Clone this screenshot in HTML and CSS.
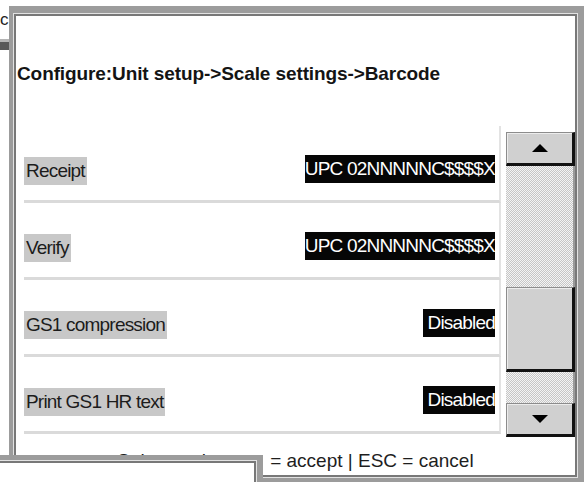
FILE: index.html
```html
<!DOCTYPE html>
<html lang="en">
<head>
    <meta charset="UTF-8">
    <title>Barcode settings</title>
    <link rel="stylesheet" href="styles.css">
</head>
<body>
    <div class="desk">
        <!-- window lying behind -->
        <div class="back-win">
            <div class="back-text">c</div>
            <div class="back-bar"></div>
        </div>

        <div class="win main-win">
            <div class="win-inner">
                <h1 class="title">Configure:Unit setup-&gt;Scale settings-&gt;Barcode</h1>

                <div class="list-area">
                    <div class="rows">
                        <div class="row">
                            <span class="label">Receipt</span>
                            <span class="value code"><span>UPC 02NNNNNC$$$$X</span></span>
                        </div>
                        <div class="row">
                            <span class="label">Verify</span>
                            <span class="value code"><span>UPC 02NNNNNC$$$$X</span></span>
                        </div>
                        <div class="row">
                            <span class="label">GS1 compression</span>
                            <span class="value state"><span>Disabled</span></span>
                        </div>
                        <div class="row">
                            <span class="label">Print GS1 HR text</span>
                            <span class="value state"><span>Disabled</span></span>
                        </div>
                    </div>

                    <div class="scrollbar">
                        <div class="sb-btn">
                            <svg width="16" height="8" viewBox="0 0 16 8"><polygon points="0,8 8,0 16,8" fill="#000"/></svg>
                        </div>
                        <div class="sb-track top-track"></div>
                        <div class="sb-thumb"></div>
                        <div class="sb-track low-track"></div>
                        <div class="sb-btn">
                            <svg width="16" height="8" viewBox="0 0 16 8"><polygon points="0,0 16,0 8,8" fill="#000"/></svg>
                        </div>
                    </div>
                </div>

                <div class="status">Select option + &#8629; = accept | ESC = cancel</div>
            </div>
        </div>

        <!-- window lying in front, bottom left -->
        <div class="win front-win">
            <div class="win-inner"></div>
        </div>
    </div>
</body>
</html>
```

FILE: styles.css
```css
/* Page */
body {
    margin: 0;
    background: #fff;
    font-family: "Liberation Sans", Arial, sans-serif;
}

.desk {
    position: relative;
    width: 584px;
    height: 482px;
    overflow: hidden;
    background: #fff;
}

/* Window behind */
.back-win {
    position: absolute;
    left: 0;
    top: 0;
    width: 20px;
    height: 60px;
}

.back-text {
    padding-top: 10px;
    font-size: 17px;
    line-height: 20px;
    color: #222;
}

.back-bar {
    margin-top: 9px;
    height: 8px;
    background: #585858;
    border-top: 3px solid #b4b4b4;
}

/* Window frames */
.win {
    position: absolute;
    box-sizing: border-box;
    border-style: solid;
    border-color: #9c9c9c;
}

.win-inner {
    box-sizing: border-box;
    height: 100%;
    padding: 2px;
    border: 1px solid #e2e2e2;
    box-shadow: inset 0 0 0 2px #787878;
    background: #fff;
}

.main-win {
    left: 9px;
    top: 6px;
    width: 575px;
    height: 476px;
    border-width: 7px 6px 4px 4px;
}

.front-win {
    left: -12px;
    top: 455px;
    width: 275px;
    height: 40px;
    border-width: 5px 6px 0 4px;
}

/* Heading */
.title {
    margin: 47px 0 0 1px;
    font-size: 19px;
    line-height: 22px;
    font-weight: bold;
    letter-spacing: -0.1px;
    color: #141414;
}

/* Option list */
.list-area {
    display: flex;
    align-items: flex-start;
    margin-top: 41px;
}

.rows {
    margin-left: 8px;
    width: 477px;
}

.row {
    display: flex;
    align-items: center;
    justify-content: space-between;
    box-sizing: border-box;
    height: 77px;
    padding: 16px 4px 0 0;
    border-right: 2px solid #e3e3e3;
    border-bottom: 3px solid #dadada;
}

.label {
    height: 28px;
    line-height: 28px;
    padding: 0 2px;
    background: #c8c8c8;
    font-size: 19px;
    letter-spacing: -0.8px;
    color: #1c1c1c;
}

.value {
    display: flex;
    justify-content: flex-end;
    overflow: hidden;
    height: 28px;
    line-height: 28px;
    margin-bottom: 4px;
    background: #060606;
    color: #fff;
    font-size: 19px;
    letter-spacing: -0.8px;
}

.value span {
    flex-shrink: 0;
    white-space: nowrap;
}

.value.code {
    width: 190px;
}

.value.state {
    width: 72px;
}

/* Scrollbar */
.scrollbar {
    display: flex;
    flex-direction: column;
    width: 69px;
    margin: 6px 0 0 5px;
}

.sb-btn,
.sb-thumb {
    box-sizing: border-box;
    background: #d0d0d0;
    border-style: solid;
    border-width: 1px 3px 3px 1px;
    border-color: #8c8c8c #111 #111 #8c8c8c;
    box-shadow: inset 1px 1px 0 #ececec;
}

.sb-btn {
    display: flex;
    align-items: center;
    justify-content: center;
    height: 34px;
}

.sb-thumb {
    height: 85px;
}

.sb-track {
    background: repeating-conic-gradient(#c6c6c6 0 25%, #f4f4f4 0 50%) 0 0 / 2px 2px;
    border-right: 2px solid #9a9a9a;
}

.top-track {
    height: 121px;
}

.low-track {
    height: 31px;
}

/* Status line */
.status {
    margin-top: 13px;
    text-align: center;
    font-size: 19px;
    line-height: 22px;
    color: #1e1e1e;
}
```
